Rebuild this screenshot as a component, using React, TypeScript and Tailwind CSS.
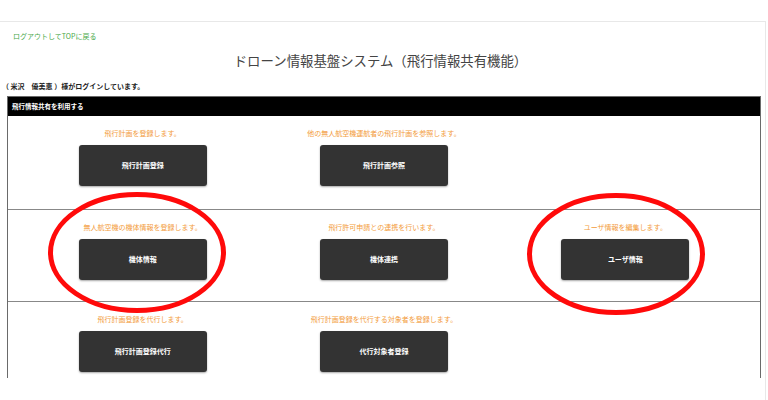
import React from "react";

const FONT = { fontFamily: '"Noto Sans CJK JP", "Noto Sans", sans-serif' };

type Cell = { desc: string; label: string } | null;

const rows: { cells: Cell[]; h: string }[] = [
  {
    h: "h-[93px]",
    cells: [
      { desc: "飛行計画を登録します。", label: "飛行計画登録" },
      { desc: "他の無人航空機運航者の飛行計画を参照します。", label: "飛行計画参照" },
      null,
    ],
  },
  {
    h: "h-[92px]",
    cells: [
      { desc: "無人航空機の機体情報を登録します。", label: "機体情報" },
      { desc: "飛行許可申請との連携を行います。", label: "機体連携" },
      { desc: "ユーザ情報を編集します。", label: "ユーザ情報" },
    ],
  },
  {
    h: "h-[77px]",
    cells: [
      { desc: "飛行計画登録を代行します。", label: "飛行計画登録代行" },
      { desc: "飛行計画登録を代行する対象者を登録します。", label: "代行対象者登録" },
      null,
    ],
  },
];

function CellView({ cell }: { cell: Cell }) {
  if (!cell) return <div />;
  return (
    <div className="flex flex-col items-center pt-[12px]">
      <div className="h-[10px] text-[7px] leading-[10px] text-[#f39c3c] whitespace-nowrap">
        {cell.desc}
      </div>
      <button className="mt-[7px] flex h-[41px] w-[128px] items-center justify-center rounded-[3px] bg-[#333333] text-[7px] font-bold text-white shadow-[0_1px_2px_rgba(0,0,0,0.35)]">
        {cell.label}
      </button>
    </div>
  );
}

export default function App() {
  return (
    <div className="relative h-[400px] w-[768px] overflow-hidden bg-white" style={FONT}>
      <div className="h-[21px]" />
      <div className="h-[379px] w-[766px] border-t border-r border-[#e8e8e8]">
        <div className="pl-[13px] pt-[9px] text-[7px] leading-[10px] text-[#49a949]">
          ログアウトしてTOPに戻る
        </div>
        <div className="mt-[10px] text-center text-[13.4px] leading-[18px] text-[#444] pr-[4px]">
          ドローン情報基盤システム（飛行情報共有機能）
        </div>
        <div className="mt-[12px] pl-[2px] text-[7px] font-bold leading-[10px] text-[#222]">
          （ 米沢　優美恵 ）様がログインしています。
        </div>
        <div className="ml-[7px] mt-[5px] w-[754px] border-x border-t border-[#6a6a6a]">
          <div className="flex h-[19px] items-center bg-black pl-[4px] text-[6.5px] font-bold text-white">
            飛行情報共有を利用する
          </div>
          {rows.map((r, i) => (
            <div
              key={i}
              className={`${r.h} grid grid-cols-3 px-[14px] ${i > 0 ? "border-t border-[#888]" : ""}`}
            >
              {r.cells.map((c, j) => (
                <CellView key={j} cell={c} />
              ))}
            </div>
          ))}
        </div>
      </div>
      <svg
        className="pointer-events-none absolute left-0 top-0"
        width="768"
        height="400"
        viewBox="0 0 768 400"
      >
        <ellipse cx="137" cy="252.5" rx="86.5" ry="58" fill="none" stroke="#ff0a0a" strokeWidth="5" />
        <ellipse cx="616" cy="254" rx="86.5" ry="58.5" fill="none" stroke="#ff0a0a" strokeWidth="5" />
      </svg>
    </div>
  );
}
